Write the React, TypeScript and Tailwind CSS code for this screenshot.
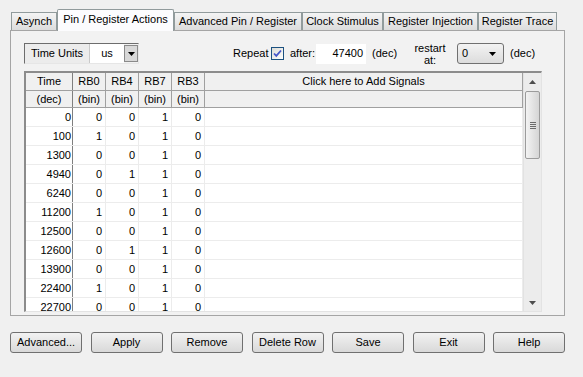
const tabs = [
  {label: "Asynch", w: "w-[46px]"},
  {label: "Pin / Register Actions", w: "w-[117px]", active: true},
  {label: "Advanced Pin / Register", w: "w-[128px]"},
  {label: "Clock Stimulus", w: "w-[81px]"},
  {label: "Register Injection", w: "w-[95px]"},
  {label: "Register Trace", w: "w-[79px]"},
];

const rows = [
  ["0", "0", "0", "1", "0"],
  ["100", "1", "0", "1", "0"],
  ["1300", "0", "0", "1", "0"],
  ["4940", "0", "1", "1", "0"],
  ["6240", "0", "0", "1", "0"],
  ["11200", "1", "0", "1", "0"],
  ["12500", "0", "0", "1", "0"],
  ["12600", "0", "1", "1", "0"],
  ["13900", "0", "0", "1", "0"],
  ["22400", "1", "0", "1", "0"],
  ["22700", "0", "0", "1", "0"],
];

const buttons = ["Advanced...", "Apply", "Remove", "Delete Row", "Save", "Exit", "Help"];

function DownArrow({className = ""}: {className?: string}) {
  return (
    <svg width="7" height="4" viewBox="0 0 7 4" className={className}>
      <path d="M0 0h7L3.5 4z" fill="#000" />
    </svg>
  );
}

function Scrollbar() {
  return (
    <div className="flex w-[18px] flex-col bg-[#ececec] border-l border-[#e2e2e2]">
      <div className="flex h-[18px] items-center justify-center">
        <svg width="7" height="4" viewBox="0 0 7 4">
          <path d="M0 4h7L3.5 0z" fill="#4d4d4d" />
        </svg>
      </div>
      <div className="mx-[1px] flex h-[68px] items-center justify-center rounded-[2px] border border-[#9b9b9b] bg-gradient-to-r from-[#f3f3f3] to-[#d5d5d5]">
        <div className="flex flex-col gap-[1px]">
          <div className="h-[1px] w-[6px] bg-[#6c6c6c]" />
          <div className="h-[1px] w-[6px] bg-[#6c6c6c]" />
          <div className="h-[1px] w-[6px] bg-[#6c6c6c]" />
          <div className="h-[1px] w-[6px] bg-[#6c6c6c]" />
        </div>
      </div>
      <div className="flex-1" />
      <div className="flex h-[16px] items-center justify-center">
        <svg width="7" height="4" viewBox="0 0 7 4">
          <path d="M0 0h7L3.5 4z" fill="#4d4d4d" />
        </svg>
      </div>
    </div>
  );
}

export default function App() {
  return (
    <div
      className="h-[377px] w-[583px] overflow-hidden bg-[#f0f0f0] text-[11px] text-black"
      style={{fontFamily: '"Liberation Sans", Arial, sans-serif'}}
    >
      {/* tab strip */}
      <div className="flex h-[30px] items-end pl-[11px]">
        {tabs.map((t) =>
          t.active ? (
            <div
              key={t.label}
              className={`${t.w} relative z-10 -mb-[1px] flex h-[22px] items-center justify-center rounded-t-[2px] border border-b-0 border-[#919b9c] bg-[#fcfcfe] pb-[2px]`}
            >
              {t.label}
            </div>
          ) : (
            <div
              key={t.label}
              className={`${t.w} flex h-[18px] items-center justify-center border border-b-0 border-[#919b9c] bg-gradient-to-b from-[#f4f4f4] to-[#dcdcdc]`}
            >
              {t.label}
            </div>
          )
        )}
      </div>

      {/* panel */}
      <div className="ml-[10px] flex h-[286px] w-[555px] flex-col border border-[#a5a5a5] bg-[#f2f2f2] pl-[13px] pt-[12px]">
        <div className="flex h-[21px] items-center">
          <div className="flex h-[21px] w-[115px] border border-b-[#e6e6e6] border-l-[#6d6d6d] border-r-[#e6e6e6] border-t-[#6d6d6d]">
            <div className="flex w-[65px] items-center justify-center border-r border-[#c9c9c9] bg-[#ececec]">
              Time Units
            </div>
            <div className="flex w-[34px] items-center justify-center bg-white">us</div>
            <div className="my-[1px] flex w-[14px] items-center justify-center border border-[#8a8a8a] bg-[#d8d8d8]">
              <DownArrow />
            </div>
          </div>

          <span className="ml-[94px] w-[35px]">Repeat</span>
          <div className="ml-[3px] flex h-[13px] w-[13px] items-center justify-center border border-[#1c5180] bg-gradient-to-br from-[#dcdcd7] to-white">
            <svg width="9" height="9" viewBox="0 0 9 9">
              <path d="M1 4.5l2.3 2.4L8 1.5" fill="none" stroke="#4757c9" strokeWidth="1.8" />
            </svg>
          </div>
          <span className="ml-[6px] w-[26px]">after:</span>
          <div className="flex h-[20px] w-[50px] items-center justify-end bg-white pr-[3px]">47400</div>
          <span className="ml-[6px] w-[26px]">(dec)</span>
          <div className="ml-[15px] flex w-[34px] flex-col items-center leading-[12px]">
            <span>restart</span>
            <span>at:</span>
          </div>
          <div className="ml-[10px] flex h-[21px] w-[47px] items-center rounded-[3px] border border-[#707070] bg-gradient-to-b from-[#f3f3f3] to-[#dcdcdc] pl-[4px] pr-[7px]">
            <span className="flex-1">0</span>
            <DownArrow />
          </div>
          <span className="ml-[6px]">(dec)</span>
        </div>

        {/* table */}
        <div className="mt-[7px] flex h-[241px] w-[518px] border-b border-l-2 border-r border-t-2 border-b-[#e3e3e3] border-l-[#8c8c8c] border-r-[#e3e3e3] border-t-[#8c8c8c]">
          <div className="flex min-w-0 flex-1 flex-col overflow-hidden bg-white">
            <div className="flex h-[19px] border-b border-[#a0a0a0] bg-[#f0f0f0]">
              <div className="flex w-[47px] items-center justify-center border-r border-[#7f7f7f]">Time</div>
              {["RB0", "RB4", "RB7", "RB3"].map((h) => (
                <div key={h} className="flex w-[33px] items-center justify-center border-r border-[#a0a0a0]">
                  {h}
                </div>
              ))}
              <div className="flex flex-1 items-center justify-center border-r border-[#a0a0a0]">
                Click here to Add Signals
              </div>
            </div>
            <div className="flex h-[18px] border-b border-[#a0a0a0] bg-[#f0f0f0]">
              <div className="flex w-[47px] items-center justify-center border-r border-[#7f7f7f]">(dec)</div>
              {[0, 1, 2, 3].map((i) => (
                <div key={i} className="flex w-[33px] items-center justify-center border-r border-[#a0a0a0]">
                  (bin)
                </div>
              ))}
              <div className="flex-1 border-r border-[#a0a0a0]" />
            </div>
            {rows.map((r) => (
              <div key={r[0]} className="flex h-[19px] shrink-0 border-b border-[#ececec]">
                <div className="flex w-[47px] items-center justify-end border-r border-[#7f7f7f] pr-[1px]">{r[0]}</div>
                {r.slice(1).map((v, i) => (
                  <div key={i} className="flex w-[33px] items-center justify-end border-r border-[#ececec] pr-[3px]">
                    {v}
                  </div>
                ))}
                <div className="flex-1 border-r border-[#ececec]" />
              </div>
            ))}
          </div>
          <Scrollbar />
        </div>
      </div>

      {/* buttons */}
      <div className="ml-[10px] mt-[16px] flex w-[555px] justify-between">
        {buttons.map((b) => (
          <div
            key={b}
            className="flex h-[21px] w-[72px] items-center justify-center rounded-[3px] border border-[#707070] bg-gradient-to-b from-[#f2f2f2] to-[#d9d9d9]"
          >
            {b}
          </div>
        ))}
      </div>
    </div>
  );
}
